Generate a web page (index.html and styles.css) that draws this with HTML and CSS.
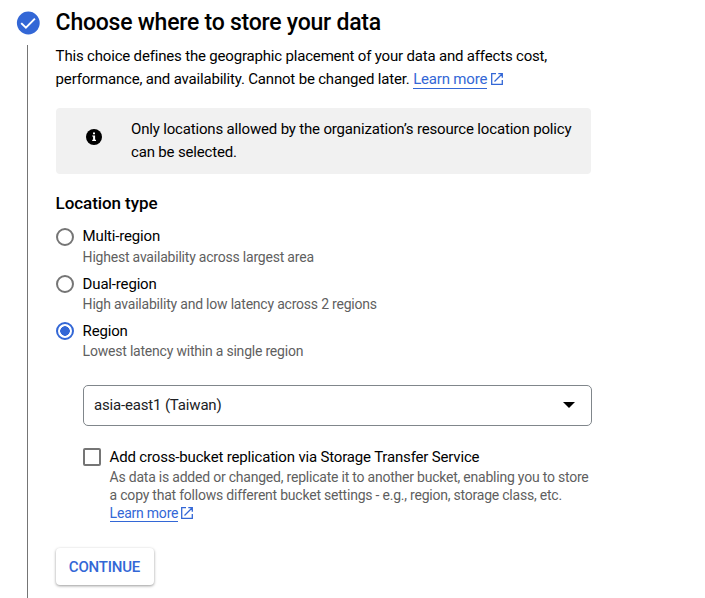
FILE: index.html
```html
<!DOCTYPE html>
<html lang="en"><head><meta charset="utf-8"><title>Choose where to store your data</title><link rel="stylesheet" href="styles.css"></head>
<body>
<main class="step">
<div class="rail"><svg class="check" width="24" height="24" viewBox="0 0 24 24"><circle cx="12.3" cy="12" r="11.4" fill="#3367d6"/><path d="M5.2 12.1l4.7 4.5 9-9" fill="none" stroke="#fff" stroke-width="2"/></svg><div class="line"></div></div>
<section class="content">
<h1>Choose where to store your data</h1>
<p class="intro">This choice defines the geographic placement of your data and affects cost,<br>performance, and availability. Cannot be changed later. <a><span>Learn more</span><svg class="ext" viewBox="0 0 14 14"><path d="M6 1.7H1.7v10.6h10.6V8M8.3 1.7h4v4M12 2L4.5 9.5"/></svg></a></p>
<div class="notice"><svg width="16" height="16" viewBox="0 0 16 16"><circle cx="8" cy="8" r="8"/><path d="M6.2 6.4h2.9v4.4h.9V12H6.2v-1.2h.9V7.6h-.9zM7 3.5h2v1.8H7z" fill="#fff"/></svg><p>Only locations allowed by the organization’s resource location policy<br>can be selected.</p></div>
<h2>Location type</h2>
<div class="option"><i class="radio"></i><div><b>Multi-region</b><small>Highest availability across largest area</small></div></div>
<div class="option"><i class="radio"></i><div><b class="low">Dual-region</b><small>High availability and low latency across 2 regions</small></div></div>
<div class="option"><i class="radio on"></i><div><b class="low">Region</b><small>Lowest latency within a single region</small></div></div>
<div class="select"><span>asia-east1 (Taiwan)</span><i class="arrow"></i></div>
<div class="replication"><i class="box"></i><div><b class="low">Add cross-bucket replication via Storage Transfer Service</b><p>As data is added or changed, replicate it to another bucket, enabling you to store<br>a copy that follows different bucket settings - e.g., region, storage class, etc.<br><a><span>Learn more</span><svg class="ext" viewBox="0 0 14 14"><path d="M6 1.7H1.7v10.6h10.6V8M8.3 1.7h4v4M12 2L4.5 9.5"/></svg></a></p></div></div>
<button>CONTINUE</button>
</section></main>
</body></html>
```
FILE: styles.css
```css
*{box-sizing:border-box}
body{margin:0;background:#fff;color:#000;font-family:Roboto,sans-serif;overflow:hidden}
h1,h2,p{margin:0}
h1,h2,.intro,b,small,.replication p{text-indent:0;margin-left:-.4px}
.step{display:flex;height:598px}
.rail{width:56px;padding:11px 0 0 16px;display:flex;flex-direction:column;flex-shrink:0}
.check{display:block;flex-shrink:0}
.line{width:1px;background:#757575;margin:10px 0 0 11px;flex:1}
.content{width:536px;padding-top:8px}
h1{font-size:23px;letter-spacing:-.23px;line-height:30px;font-weight:500;white-space:nowrap}
.intro{margin-top:7px;font-size:15px;letter-spacing:-.18px;line-height:23px;white-space:nowrap}
a{color:#3367d6}
a span{border-bottom:1px solid}
.ext{width:14px;height:14px;margin-left:3px;vertical-align:-2px;fill:none;stroke:#3367d6;stroke-width:1.3}
.notice{margin-top:17px;width:535px;height:66px;background:#f1f1f1;border-radius:4px;display:flex;padding:10px 0 0 30px}
.notice svg{margin-top:11px}
.notice p{margin-left:29px;font-size:15px;letter-spacing:-.17px;line-height:23px;white-space:nowrap}
h2{font-size:17px;letter-spacing:-.08px;line-height:22px;font-weight:500;margin-top:18px;margin-bottom:11px}
b{display:block;font-weight:400;font-size:15px;letter-spacing:-.17px;line-height:23px;white-space:nowrap}
.low{padding-top:1px;margin-bottom:-1px}
small{display:block;font-size:14px;letter-spacing:-.21px;line-height:18px;color:#5f5f5f;white-space:nowrap}
.option{display:flex;height:47px}
.radio{width:18px;height:18px;border:2px solid #757575;border-radius:50%;margin:3px 9px 0 0}
.radio.on{border-color:#3367d6;background:radial-gradient(circle,#3367d6 4.5px,transparent 5px)}
.select{margin:19px 0 0 27px;width:509px;height:41px;border:1px solid #80868b;border-radius:5px;display:flex;align-items:center;justify-content:space-between;padding:0 16px 2px 10px;font-size:15px;letter-spacing:-.17px;color:#202124}
.arrow{border:6px solid transparent;border-top-color:#000;border-bottom:0}
.replication{display:flex;margin:19px 0 0 27px}
.box{width:18px;height:18px;border:2px solid #757575;border-radius:2px;margin:3px 9px 0 0;flex-shrink:0}
.replication p{font-size:14px;letter-spacing:-.22px;line-height:18px;color:#5f5f5f;white-space:nowrap}
.replication .ext{margin-left:2px}
button{display:block;margin-top:26px;width:98px;height:37px;border:0;border-radius:4px;background:#fff;color:#3367d6;font:500 15px Roboto,sans-serif;letter-spacing:-.2px;padding:0 1px 0 0;box-shadow:0 1px 3px #0006}
```
